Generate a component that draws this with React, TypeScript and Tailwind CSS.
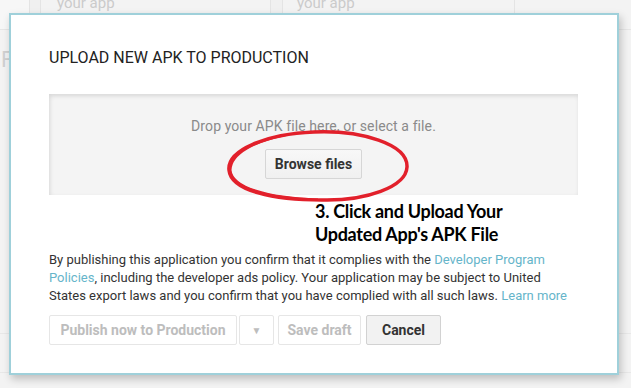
import React from 'react';

const roboto = { fontFamily: 'Roboto, "Liberation Sans", sans-serif' };

function Backdrop() {
  return (
    <div className="absolute inset-0 overflow-hidden bg-[#f3f3f3]">
      {/* faint page behind the modal */}
      <div className="flex h-[30px] border-b border-[#e6e6e6] text-[15px] text-[#cbcbcb]" style={roboto}>
        <div className="w-[29px] bg-[#f7f7f7]" />
        <div className="w-[12px] border-x border-[#e4e4e4] bg-[#f0f0f0]" />
        <div className="w-[229px] -mt-[7px] pl-[16px] leading-[20px]">your app</div>
        <div className="w-[13px] border-x border-[#e4e4e4] bg-[#f0f0f0]" />
        <div className="w-[231px] -mt-[7px] pl-[14px] leading-[20px]">your app</div>
        <div className="w-px bg-[#e4e4e4]" />
        <div className="flex-1" />
      </div>
      <div className="mt-[17px] pl-[1px] text-[22px] leading-[26px] text-[#d0d0d0]" style={roboto}>F</div>
      <div className="mt-[260px] h-[40px] border-y border-[#e8e8e8]" />
    </div>
  );
}

function Ellipse() {
  return (
    <svg
      className="pointer-events-none absolute left-[215px] top-[114px]"
      width="184"
      height="74"
      viewBox="0 0 184 74"
      fill="none"
    >
      <path
        d="M88 3 C 135 1, 182 15, 181 38 C 180 58, 140 72, 96 71 C 48 71, 5 62, 3 41 C 1 21, 40 5, 88 3 Z"
        stroke="#e2202b"
        strokeWidth="3.5"
      />
      <path
        d="M60 6 C 30 12, 5 24, 4.5 41 C 6 58, 40 69, 92 70.5"
        stroke="#e2202b"
        strokeWidth="2"
      />
    </svg>
  );
}

export default function App() {
  return (
    <div className="relative h-[388px] w-[631px] overflow-hidden">
      <Backdrop />

      <div className="absolute left-[9px] top-[13px] h-[362px] w-[610px] border-2 border-[#9fd0da] bg-white px-[38px] pt-[33px] shadow-[2px_4px_8px_rgba(0,0,0,0.22)]">
        <h2 className="text-[16px] leading-[20px] text-[#222]" style={roboto}>
          UPLOAD NEW APK TO PRODUCTION
        </h2>

        <div className="mt-[26px] flex h-[101px] w-[529px] flex-col items-center bg-[#f4f4f4] pt-[22px] shadow-[inset_1px_2px_4px_rgba(0,0,0,0.12)]">
          <p className="text-[14px] leading-[20px] tracking-[0.1px] text-[#8a8a8a]" style={roboto}>
            Drop your APK file here, or select a file.
          </p>
          <button
            className="mt-[13px] h-[30px] w-[97px] rounded-[2px] border border-[#d6d6d6] bg-gradient-to-b from-[#f8f8f8] to-[#f0f0f0] text-[14px] font-bold text-[#333]"
            style={roboto}
          >
            Browse files
          </button>
        </div>

        <div
          className="ml-[266px] mt-[5px] text-[18px] font-bold leading-[23px] tracking-[-0.3px] text-black"
          style={{ fontFamily: 'Lato, "Open Sans", sans-serif' }}
        >
          3. Click and Upload Your
          <br />
          Updated App's APK File
        </div>

        <p className="mt-[5px] whitespace-nowrap text-[13px] leading-[18px] text-[#333]" style={roboto}>
          By publishing this application you confirm that it complies with the{' '}
          <a className="text-[#66b5ca]">Developer Program</a>
          <br />
          <a className="text-[#66b5ca]">Policies</a>, including the developer ads policy. Your application may be subject to United
          <br />
          States export laws and you confirm that you have complied with all such laws.{' '}
          <a className="text-[#66b5ca]">Learn more</a>
        </p>

        <div className="mt-[10px] flex h-[30px] text-[14px] font-bold" style={roboto}>
          <button className="w-[188px] rounded-[2px] border border-[#e6e6e6] bg-white text-[#bdbdbd]">
            Publish now to Production
          </button>
          <button className="ml-[2px] w-[35px] rounded-[2px] border border-[#e6e6e6] bg-white text-[10px] text-[#bdbdbd]">
            ▼
          </button>
          <button className="ml-[4px] w-[83px] rounded-[2px] border border-[#e6e6e6] bg-white text-[#bdbdbd]">
            Save draft
          </button>
          <button className="ml-[5px] w-[75px] rounded-[2px] border border-[#d2d2d2] bg-[#f2f2f2] text-[#333]">
            Cancel
          </button>
        </div>

        <Ellipse />
      </div>
    </div>
  );
}
